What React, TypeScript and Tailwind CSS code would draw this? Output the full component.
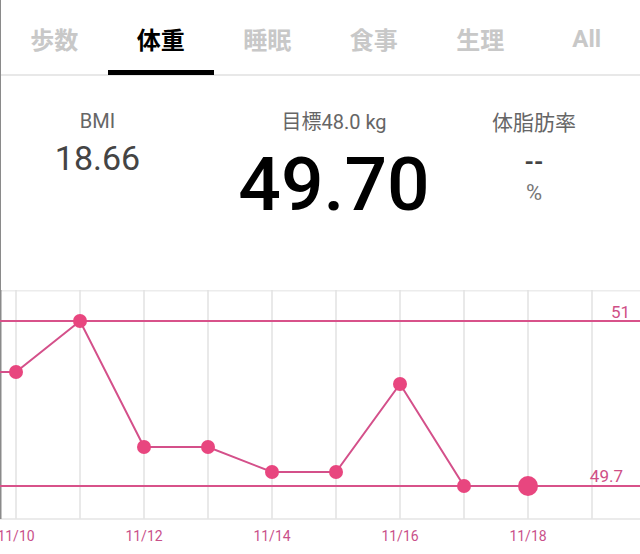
import React from 'react';

const tabs = ['歩数', '体重', '睡眠', '食事', '生理', 'All'];

const points: [number, number][] = [
  [16, 82],
  [80, 31],
  [144, 157],
  [208, 157],
  [272, 182],
  [336, 182],
  [400, 94],
  [464, 196],
  [528, 196],
];

const gridX = [16, 80, 144, 208, 272, 336, 400, 464, 528, 592];
const dates = [
  { x: 16, t: '11/10' },
  { x: 144, t: '11/12' },
  { x: 272, t: '11/14' },
  { x: 400, t: '11/16' },
  { x: 528, t: '11/18' },
];

function Chart() {
  const path = points.map(([x, y]) => `L${x} ${y}`).join(' ');
  return (
    <svg width="640" height="264" viewBox="0 0 640 264" className="block">
      <line x1="0" y1="0.5" x2="640" y2="0.5" stroke="#ececec" strokeWidth="2" />
      {gridX.map((x) => (
        <line key={x} x1={x} y1="0" x2={x} y2="229" stroke="#e2e2e2" strokeWidth="1.5" />
      ))}
      <line x1="0" y1="229" x2="640" y2="229" stroke="#e4e4e4" strokeWidth="1.5" />
      <line x1="0.75" y1="0" x2="0.75" y2="229" stroke="#8a8a8a" strokeWidth="1.5" />
      <line x1="0" y1="31" x2="640" y2="31" stroke="#d8528a" strokeWidth="2" />
      <line x1="0" y1="196" x2="640" y2="196" stroke="#d8528a" strokeWidth="2" />
      <text x="630" y="28" textAnchor="end" fill="#cf4f86" fontSize="17" fontFamily="Roboto, sans-serif">51</text>
      <text x="623" y="192" textAnchor="end" fill="#cf4f86" fontSize="17" fontFamily="Roboto, sans-serif">49.7</text>
      <path d={`M0 82 ${path}`} fill="none" stroke="#d4508a" strokeWidth="2" />
      {points.map(([x, y], i) => (
        <circle key={i} cx={x} cy={y} r={i === points.length - 1 ? 10 : 7} fill="#e8467f" />
      ))}
      {dates.map((d) => (
        <text key={d.t} x={d.x} y="251" textAnchor="middle" fill="#c9508a" fontSize="14" fontFamily="Roboto, sans-serif">
          {d.t}
        </text>
      ))}
    </svg>
  );
}

export default function App() {
  return (
    <div className="w-[640px] h-[554px] bg-white overflow-hidden" style={{ fontFamily: 'Roboto, "Noto Sans CJK JP", sans-serif' }}>
      <div className="border-l-[1.5px] border-[#8a8a8a]">
        <div className="flex h-[76px] border-b-2 border-[#e8e8e8]">
          {tabs.map((t, i) => (
            <div key={t} className="relative flex-1 flex items-center justify-center pt-[4px]">
              <span
                className={`text-[24px] leading-none font-bold ${i === 1 ? 'text-black' : 'text-[#c8c8c8]'}`}
                style={{ fontFamily: i === 5 ? 'Roboto, sans-serif' : '"Noto Sans CJK JP", sans-serif' }}
              >
                {t}
              </span>
              {i === 1 && <div className="absolute left-0 right-0 bottom-[-1px] h-[5px] bg-black" />}
            </div>
          ))}
        </div>
        <div className="flex h-[214px] pt-[31px]">
          <div className="w-[193px] flex flex-col items-center">
            <div className="text-[20px] leading-[28px] text-[#666]">BMI</div>
            <div className="text-[34px] leading-[40px] mt-[3px] text-[#444]">18.66</div>
          </div>
          <div className="w-[280px] flex flex-col items-center">
            <div className="text-[20px] leading-[28px] text-[#666]">
              <span style={{ fontFamily: '"Noto Sans CJK JP", sans-serif' }}>目標</span>48.0 kg
            </div>
            <div className="text-[75px] leading-[80px] mt-[8px] text-black font-medium">49.70</div>
          </div>
          <div className="w-[120px] flex flex-col items-center">
            <div className="text-[21px] leading-[28px] text-[#666]" style={{ fontFamily: '"Noto Sans CJK JP", sans-serif' }}>
              体脂肪率
            </div>
            <div className="text-[24px] leading-[30px] mt-[12px] font-bold text-[#444]">--</div>
            <div className="text-[22px] leading-[28px] mt-[2px] text-[#777]">%</div>
          </div>
        </div>
      </div>
      <Chart />
    </div>
  );
}
